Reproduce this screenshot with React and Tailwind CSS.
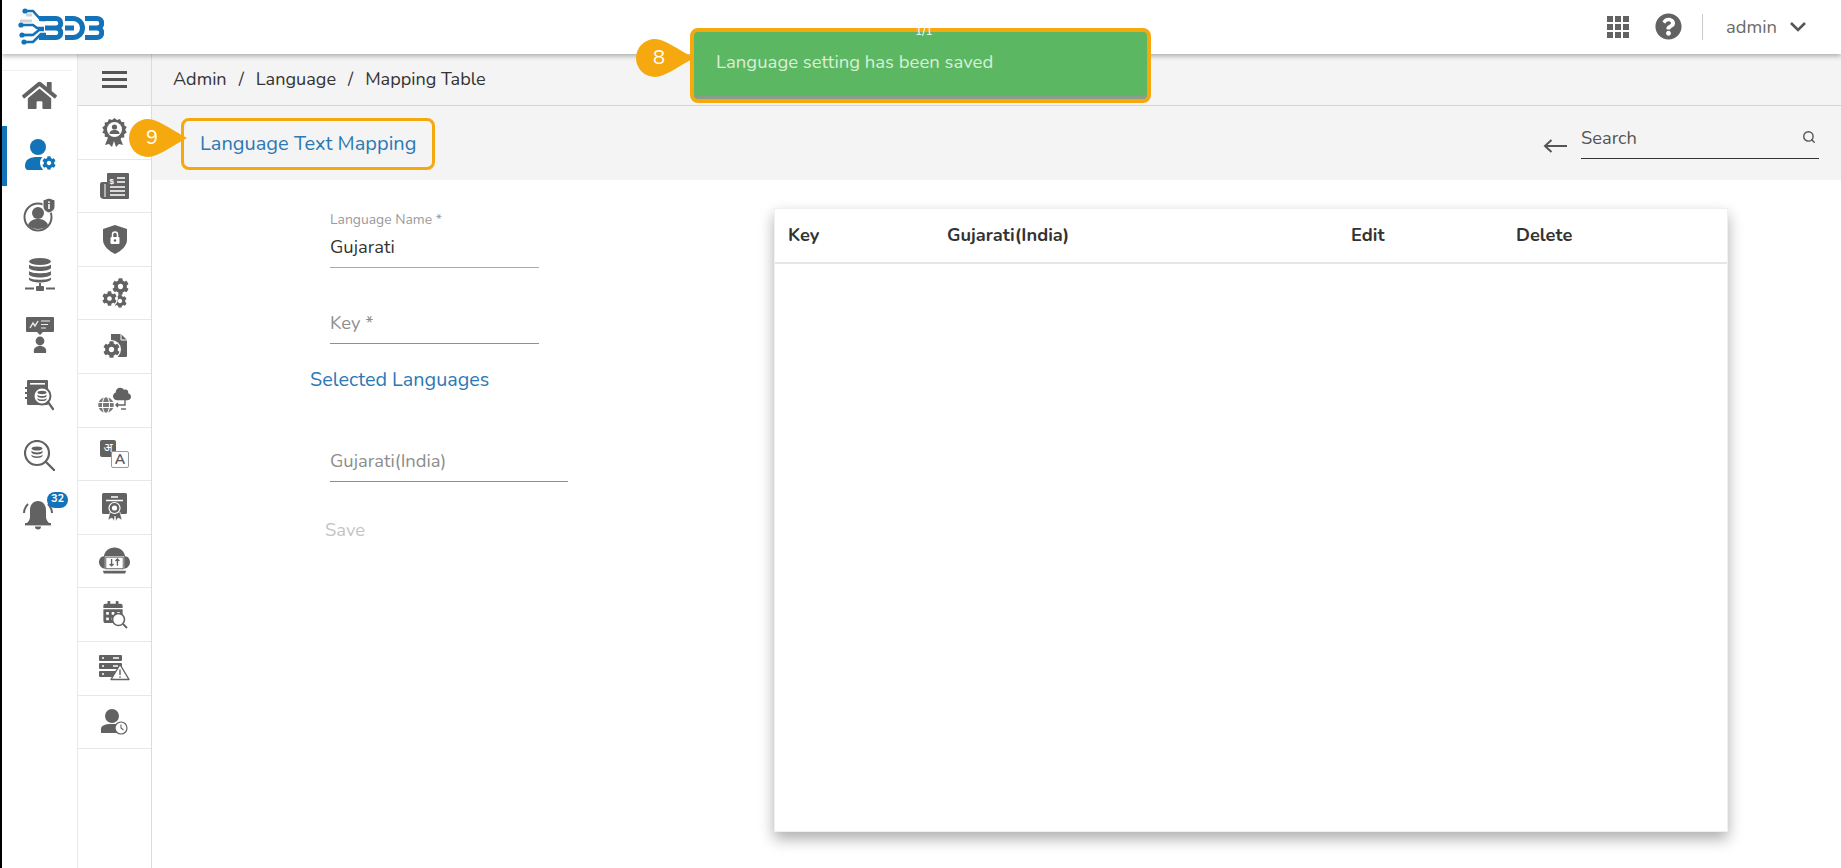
import { FaHome, FaCog, FaQuestionCircle, FaCloud, FaGlobe, FaCalendarAlt } from 'react-icons/fa';
import { Search } from 'lucide-react';

const GRIS = '#626262';
const AZUL = '#1273b8';

function Logo() {
  return (
    <svg width="86" height="38" viewBox="0 0 86 38" fill="none" stroke={AZUL} strokeWidth="5">
      <path d="M2 13h12M2 27h12M8 7h6" stroke="#cfd3d8" strokeWidth="3" />
      <path d="M7 3h8l8 9h5M3 17h12l4 3h7M4 27h11l6-5h5M6 34h9l8-8h5" strokeWidth="2.6" />
      <circle cx="7" cy="3" r="2.6" fill={AZUL} stroke="none" />
      <circle cx="3" cy="17" r="2.6" fill={AZUL} stroke="none" />
      <circle cx="4" cy="27" r="2.6" fill={AZUL} stroke="none" />
      <circle cx="6" cy="34" r="2.6" fill={AZUL} stroke="none" />
      <path d="M21 10.5h17a4.75 4.75 0 0 1 0 9.5H27h11a4.75 4.75 0 0 1 0 9.5H21" />
      <path d="M47 10.5h8a9.5 9.5 0 0 1 0 19h-8M47 20h9" />
      <path d="M67 10.5h12a4.75 4.75 0 0 1 0 9.5H71h8a4.75 4.75 0 0 1 0 9.5H67" />
    </svg>
  );
}

function UserGear() {
  return (
    <div className="relative w-[32px] h-[32px]">
      <svg width="32" height="32" viewBox="0 0 32 32" fill={AZUL}>
        <circle cx="14" cy="8" r="8" />
        <path d="M1 27c0-7 5-9 13-9s13 2 13 9c0 2-1 4-3 4H4c-2 0-3-2-3-4z" />
      </svg>
      <span className="absolute -right-[2px] -bottom-[1px] rounded-full bg-white p-[2px]">
        <FaCog size={14} color={AZUL} />
      </span>
    </div>
  );
}

function UserInfo() {
  return (
    <svg width="34" height="34" viewBox="0 0 34 34">
      <circle cx="15" cy="19" r="13.5" fill="none" stroke={GRIS} strokeWidth="2" />
      <circle cx="15" cy="15" r="6" fill={GRIS} />
      <path d="M5 27c2-5 6-6 10-6s8 1 10 6c-3 3-6 4-10 4s-7-1-10-4z" fill={GRIS} />
      <path d="M26 0l6 2v6c0 4-3 6-6 7-3-1-6-3-6-7V2z" fill={GRIS} stroke="#fff" strokeWidth="1" />
      <rect x="25.2" y="6" width="1.6" height="5" fill="#fff" />
      <rect x="25.2" y="3.4" width="1.6" height="1.6" fill="#fff" />
    </svg>
  );
}

function DataNetwork() {
  return (
    <svg width="30" height="34" viewBox="0 0 30 34" fill={GRIS}>
      <ellipse cx="15" cy="3.5" rx="11" ry="3.5" />
      <path d="M4 6.5c2 3 20 3 22 0v3.5c-2 4-20 4-22 0zM4 13c2 3 20 3 22 0v3.5c-2 4-20 4-22 0zM4 19.5c2 3 20 3 22 0v2c-2 4-20 4-22 0z" />
      <rect x="14" y="25" width="2" height="4" />
      <rect x="11" y="28" width="8" height="5" rx="1" />
      <rect x="0" y="29.5" width="9" height="2" />
      <rect x="21" y="29.5" width="9" height="2" />
    </svg>
  );
}

function Presenter() {
  return (
    <svg width="30" height="36" viewBox="0 0 30 36" fill={GRIS}>
      <path d="M2 0h26a1 1 0 0 1 1 1v13a1 1 0 0 1-1 1H18l-3 3-3-3H2a1 1 0 0 1-1-1V1a1 1 0 0 1 1-1z" />
      <path d="M5 11l3-5 2 3 3-5" fill="none" stroke="#eee" strokeWidth="1.4" />
      <path d="M16 4h9M16 7.5h7M16 11h5" stroke="#eee" strokeWidth="1.1" />
      <circle cx="15" cy="24" r="4.4" />
      <path d="M9 36c-1-5 2-7 6-7s7 2 6 7z" />
    </svg>
  );
}

function DataBook() {
  return (
    <svg width="29" height="31" viewBox="0 0 29 31">
      <rect x="2" y="0" width="21" height="25" rx="1" fill={GRIS} />
      <rect x="5" y="3" width="15" height="1.6" fill="#fff" />
      <path d="M0 8h4M0 13h4M0 18h4" stroke={GRIS} strokeWidth="2" />
      <circle cx="17" cy="16" r="8.5" fill="#fff" stroke={GRIS} strokeWidth="2" />
      <ellipse cx="17" cy="12.5" rx="4.5" ry="1.7" fill={GRIS} />
      <path d="M12.5 14.5c1 2 8 2 9 0v1.8c-1 2-8 2-9 0zM12.5 18c1 2 8 2 9 0v1.5c-1 2-8 2-9 0z" fill={GRIS} />
      <path d="M23 22l5 7" stroke={GRIS} strokeWidth="2.2" strokeLinecap="round" />
    </svg>
  );
}

function DataSearch() {
  return (
    <svg width="31" height="31" viewBox="0 0 31 31">
      <circle cx="13" cy="13" r="12" fill="none" stroke={GRIS} strokeWidth="2.2" />
      <ellipse cx="13" cy="8.5" rx="5.5" ry="2" fill={GRIS} />
      <path d="M7.5 10.5c1 2.5 10 2.5 11 0v2c-1 2.5-10 2.5-11 0zM7.5 14.5c1 2.5 10 2.5 11 0v1.5c-1 2.5-10 2.5-11 0z" fill={GRIS} />
      <path d="M22.5 22.5l7.5 7.5" stroke={GRIS} strokeWidth="2.4" strokeLinecap="round" />
    </svg>
  );
}

function BellBadge() {
  return (
    <div className="relative w-[30px] h-[31px] -ml-[3px]">
      <svg width="30" height="31" viewBox="0 0 30 31" fill={GRIS}>
        <path d="M15 1c5 0 8 4 8 9v7c0 3 2 5 3 6H4c1-1 3-3 3-6v-7c0-5 3-9 8-9z" />
        <rect x="2" y="23" width="26" height="2.4" />
        <path d="M12 26.5h6a3 3 0 0 1-6 0z" />
        <path d="M1 13c0-4 2-7 4-9M29 13c0-4-2-7-4-9" fill="none" stroke={GRIS} strokeWidth="2" />
      </svg>
      <span className="absolute -top-[8px] left-[24px] w-[21px] h-[16px] rounded-full bg-[#1273b8] text-white text-[11px] font-bold flex items-center justify-center">
        32
      </span>
    </div>
  );
}

function Award() {
  return (
    <svg width="25" height="29" viewBox="0 0 25 29" fill={GRIS}>
      <path d="M7 17L3 27l4-1 3 3 2-6 2 6 3-3 4 1-4-10z" />
      <path d="M12.5 0l2.5 2 3-1 1.3 2.8 3 .4-.1 3.1 2.5 1.8-1.5 2.7 1.5 2.7-2.5 1.8.1 3.1-3 .4L18 22l-3-1-2.5 2-2.5-2-3 1-1.3-2.8-3-.4.1-3.1L.3 14.8l1.5-2.7L.3 9.4l2.5-1.8-.1-3.1 3-.4L7 1l3 1z" />
      <circle cx="12.5" cy="11.5" r="7.5" fill="#fff" />
      <circle cx="12.5" cy="9" r="2.6" fill={GRIS} />
      <path d="M7.5 16c0-3 2-4 5-4s5 1 5 4z" fill={GRIS} />
    </svg>
  );
}

function Invoice() {
  return (
    <svg width="29" height="26" viewBox="0 0 29 26" fill={GRIS}>
      <path d="M8 0h20a1 1 0 0 1 1 1v24a1 1 0 0 1-1 1H4c-2 0-4-1-4-3V11c0-1 1-2 2-2h5V1c0-.5.5-1 1-1z" />
      <path d="M5 11v13" stroke="#fff" strokeWidth="1" />
      <path d="M17 5h8M17 9h8M10 14h15M10 18h15M10 22h15" stroke="#fff" strokeWidth="1.6" />
      <text x="9.5" y="11" fontSize="8" fontWeight="700" fill="#fff" fontFamily="Liberation Sans, sans-serif">$</text>
    </svg>
  );
}

function Shield() {
  return (
    <svg width="24" height="29" viewBox="0 0 24 29" fill={GRIS}>
      <path d="M12 0l12 4v11c0 6-6 11-12 14C6 26 0 21 0 15V4z" />
      <rect x="7.5" y="12" width="9" height="7" rx="1" fill="#fff" />
      <path d="M9.5 12V9.5a2.5 2.5 0 0 1 5 0V12" fill="none" stroke="#fff" strokeWidth="1.5" />
      <circle cx="12" cy="15.5" r="1.2" fill={GRIS} />
    </svg>
  );
}

function Gears() {
  return (
    <div className="relative w-[28px] h-[30px]">
      <span className="absolute right-0 top-0"><FaCog size={17} color={GRIS} /></span>
      <span className="absolute right-[2px] bottom-0"><FaCog size={14} color={GRIS} /></span>
      <span className="absolute left-0 bottom-[1px] rounded-full bg-white p-[1px]"><FaCog size={15} color={GRIS} /></span>
    </div>
  );
}

function FileGear() {
  return (
    <div className="relative w-[25px] h-[25px]">
      <svg width="17" height="23" viewBox="0 0 17 23" fill={GRIS} className="absolute right-0 top-0">
        <path d="M1 0h10l6 6v16a1 1 0 0 1-1 1H1z" />
        <path d="M11 0v6h6" fill="none" stroke="#fff" strokeWidth="1" />
      </svg>
      <span className="absolute left-0 bottom-0 rounded-full bg-white p-[1px]">
        <FaCog size={17} color={GRIS} />
      </span>
    </div>
  );
}

function CloudGlobe() {
  return (
    <div className="relative w-[33px] h-[26px]">
      <span className="absolute right-0 -top-[2px]"><FaCloud size={18} color={GRIS} /></span>
      <span className="absolute left-0 bottom-0"><FaGlobe size={16} color="#777" /></span>
      <svg width="12" height="10" viewBox="0 0 12 10" fill="none" stroke={GRIS} strokeWidth="1.4" className="absolute right-[4px] bottom-[3px]">
        <path d="M10 0v5H1M3 3L1 5l2 2" />
        <path d="M11 9H6" />
      </svg>
    </div>
  );
}

function Translate() {
  return (
    <div className="relative w-[29px] h-[28px]">
      <span className="absolute left-0 top-0 w-[16px] h-[17px] rounded-[2px] bg-[#626262] text-white text-[12px] leading-[16px] text-center font-['Noto_Sans','Liberation_Sans',sans-serif]">अ</span>
      <span className="absolute right-0 bottom-0 w-[18px] h-[17px] rounded-[2px] bg-white border border-[#999] text-[#555] text-[14px] leading-[15px] text-center font-bold">A</span>
    </div>
  );
}

function Certificate() {
  return (
    <svg width="25" height="28" viewBox="0 0 25 28" fill={GRIS}>
      <rect x="0" y="0" width="25" height="21" rx="1.5" />
      <path d="M9 4h7M4 7.5h17" stroke="#fff" strokeWidth="1.3" />
      <path d="M8 19l-2 8 4-2 2 3 1-5 1 5 2-3 4 2-2-8z" stroke="#fff" strokeWidth="0.6" />
      <circle cx="12.5" cy="15" r="5.5" stroke="#fff" strokeWidth="1.2" />
      <circle cx="12.5" cy="15" r="2.6" fill="#fff" />
    </svg>
  );
}

function CloudLaptop() {
  return (
    <svg width="31" height="28" viewBox="0 0 32 28" fill={GRIS}>
      <path d="M7 22c-4 0-7-3-7-7 0-3 2-6 5-6 1-5 5-9 11-9s10 4 11 9c3 0 5 3 5 6 0 4-3 7-7 7z" />
      <rect x="6" y="9" width="20" height="14" fill="#fff" />
      <rect x="7" y="10" width="18" height="12" fill="#fff" stroke={GRIS} />
      <path d="M13 12v7M11 17l2 2 2-2M19 19v-7M17 14l2-2 2 2" fill="none" stroke={GRIS} strokeWidth="1.4" />
      <path d="M4 24h24l-1 3H5z" />
    </svg>
  );
}

function CalendarSearch() {
  return (
    <div className="relative w-[26px] h-[28px]">
      <span className="absolute left-0 top-0"><FaCalendarAlt size={22} color={GRIS} /></span>
      <svg width="17" height="17" viewBox="0 0 17 17" className="absolute right-0 bottom-0">
        <circle cx="7.5" cy="7.5" r="6" fill="#fff" stroke={GRIS} strokeWidth="1.6" />
        <path d="M12 12l4 4" stroke={GRIS} strokeWidth="1.8" />
      </svg>
    </div>
  );
}

function ServerAlert() {
  return (
    <div className="relative w-[31px] h-[26px]">
      <svg width="23" height="22" viewBox="0 0 23 22" className="absolute left-0 top-0" fill={GRIS}>
        <rect width="23" height="6" rx="1" />
        <rect y="8" width="23" height="6" rx="1" />
        <rect y="16" width="23" height="6" rx="1" />
        <path d="M3 3h2M3 11h2M3 19h2M14 3h6M14 11h5" stroke="#fff" strokeWidth="1.3" />
      </svg>
      <svg width="20" height="18" viewBox="0 0 20 18" className="absolute right-0 bottom-0">
        <path d="M10 1.5L19 16.5H1z" fill="#fff" stroke={GRIS} strokeWidth="1.4" strokeLinejoin="round" />
        <path d="M10 6.5v5.5M10 13.3v1.5" stroke={GRIS} strokeWidth="1.4" />
      </svg>
    </div>
  );
}

function UserClock() {
  return (
    <div className="relative w-[27px] h-[26px]">
      <svg width="20" height="24" viewBox="0 0 20 24" fill={GRIS} className="absolute left-0 top-0">
        <circle cx="11" cy="7" r="7" />
        <path d="M0 24v-4c0-3 3-5 11-5s9 2 9 5v4z" />
      </svg>
      <svg width="14" height="14" viewBox="0 0 14 14" className="absolute right-0 bottom-0">
        <circle cx="7" cy="7" r="6" fill="#fff" stroke={GRIS} strokeWidth="1.2" />
        <path d="M7 3.5V7l2.5 2" fill="none" stroke={GRIS} strokeWidth="1.1" />
      </svg>
    </div>
  );
}

const PRINCIPAL = [
  { id: 'admin', icono: <UserGear />, activo: true },
  { id: 'info', icono: <UserInfo /> },
  { id: 'data', icono: <DataNetwork /> },
  { id: 'present', icono: <Presenter /> },
  { id: 'book', icono: <DataBook /> },
  { id: 'search', icono: <DataSearch /> },
  { id: 'bell', icono: <BellBadge /> },
];

const SECUNDARIO = [
  <Award />,
  <Invoice />,
  <Shield />,
  <Gears />,
  <FileGear />,
  <CloudGlobe />,
  <Translate />,
  <Certificate />,
  <CloudLaptop />,
  <CalendarSearch />,
  <ServerAlert />,
  <UserClock />,
];

function Globo({ numero, className }) {
  return (
    <div className={`absolute ${className}`}>
      <svg width="58" height="38" viewBox="0 0 58 38" fill="#f6a90f">
        <path d="M19 0c10 0 22 10 39 19C41 28 29 38 19 38A19 19 0 0 1 19 0z" />
      </svg>
      <span className="absolute left-0 top-0 w-[46px] h-[38px] flex items-center justify-center text-white text-[20px]">{numero}</span>
    </div>
  );
}

export default function App() {
  return (
    <div className="relative h-[868px] w-full overflow-hidden bg-white border-l-2 border-black text-[#333] font-['Nunito','Lato','Noto_Sans',sans-serif]">
      <header className="relative z-10 h-[54px] bg-white shadow-[0_2px_5px_rgba(0,0,0,0.3)] flex items-center justify-between pl-[16px] pr-[35px]">
        <Logo />
        <div className="flex items-center text-[#626262]">
          <div className="grid grid-cols-3 gap-[2px] mr-[26px]">
            {[1, 2, 3, 4, 5, 6, 7, 8, 9].map((n) => (
              <span key={n} className="w-[6px] h-[6px] bg-[#626262]" />
            ))}
          </div>
          <FaQuestionCircle size={27} />
          <span className="w-px h-[26px] bg-[#c9c9c9] ml-[20px] mr-[23px]" />
          <span className="text-[18.4px] text-[#6a6a6a]">admin</span>
          <svg width="16" height="10" viewBox="0 0 16 10" fill="none" stroke="#555" strokeWidth="2.6" className="ml-[13px]">
            <path d="M1 1l7 7 7-7" />
          </svg>
        </div>
      </header>

      <div className="flex h-[814px]">
        <nav className="w-[76px] shrink-0 bg-white border-r border-[#e8e8e8]">
          <div className="mt-[16px] h-px w-[70px] bg-[#efefef]" />
          <div className="h-[48px] flex items-center justify-center">
            <FaHome size={35} color={GRIS} />
          </div>
          <div className="mt-[6px]">
            {PRINCIPAL.map((item) => (
              <div key={item.id} className="relative h-[60px] flex items-center justify-center">
                {item.activo && <span className="absolute left-0 top-[1px] w-[5px] h-[60px] bg-[#1273b8]" />}
                {item.icono}
              </div>
            ))}
          </div>
        </nav>

        <aside className="w-[74px] shrink-0 bg-white border-r border-[#dcdcdc]">
          <div className="h-[52px] bg-[#f4f4f4] border-b border-[#d8d8d8] flex flex-col items-center justify-center gap-[4px]">
            <span className="w-[25px] h-[3px] bg-[#555]" />
            <span className="w-[25px] h-[3px] bg-[#555]" />
            <span className="w-[25px] h-[3px] bg-[#555]" />
          </div>
          {SECUNDARIO.map((icono, i) => (
            <div key={i} className="h-[53.6px] border-b border-[#e8e8e8] flex items-center justify-center">{icono}</div>
          ))}
        </aside>

        <main className="flex-1 min-w-0 flex flex-col">
          <div className="h-[52px] bg-[#f4f4f4] border-b border-[#d4d4d4] flex items-center pl-[21px] text-[18.1px] text-[#333]">
            <span>Admin</span>
            <span className="mx-[12px]">/</span>
            <span>Language</span>
            <span className="mx-[12px]">/</span>
            <span>Mapping Table</span>
          </div>
          <div className="relative h-[74px] bg-[#f4f4f4] flex items-center justify-between pl-[48px] pr-[22px]">
            <span className="text-[20px] text-[#2b78b5] mt-[2px]">Language Text Mapping</span>
            <div className="flex items-center">
              <svg width="24" height="14" viewBox="0 0 24 14" fill="none" stroke="#555" strokeWidth="2" className="mr-[14px] mt-[6px]">
                <path d="M24 7H2M8.5 1L2 7l6.5 6" />
              </svg>
              <div className="w-[238px] h-[37px] border-b border-[#333] flex items-center justify-between pr-[3px] mb-[6px]">
                <span className="text-[18.3px] text-[#555] -mt-[2px]">Search</span>
                <Search size={14} strokeWidth={2.4} color="#555" className="-mt-[5px]" />
              </div>
            </div>
          </div>

          <div className="flex-1 flex items-start">
            <div className="w-[622px] shrink-0 pl-[178px] pt-[33px]">
              <div className="w-[209px] border-b border-[#aaa]">
                <div className="text-[13.9px] leading-[14px] text-[#9a9a9a]">Language Name *</div>
                <div className="text-[18.4px] leading-[24px] pt-[8px] pb-[8px] text-[#333]">Gujarati</div>
              </div>
              <div className="w-[209px] border-b border-[#8f8f8f] mt-[43px] text-[18.4px] leading-[24px] pb-[8px] text-[#8d8d8d]">Key *</div>
              <div className="-ml-[20px] mt-[24px] text-[19.8px] leading-[24px] text-[#2b78b5]">Selected Languages</div>
              <div className="w-[238px] border-b border-[#8f8f8f] mt-[57px] text-[18.4px] leading-[24px] pb-[8px] text-[#8d8d8d]">Gujarati(India)</div>
              <div className="-ml-[5px] mt-[36px] text-[18.4px] leading-[24px] text-[#c4c4c4]">Save</div>
            </div>

            <div className="w-[954px] h-[624px] mt-[28px] bg-white shadow-[0_7px_14px_rgba(0,0,0,0.32)] border border-[#f0f0f0] shrink-0">
              <div className="h-[55px] border-b-2 border-[#e4e6ec] flex items-center pl-[13px] text-[18.3px] font-bold text-[#333]">
                <span className="w-[159px]">Key</span>
                <span className="w-[404px]">Gujarati(India)</span>
                <span className="w-[165px]">Edit</span>
                <span>Delete</span>
              </div>
            </div>
          </div>
        </main>
      </div>

      <div className="absolute z-20 left-[688px] top-[28px] w-[461px] h-[75px] rounded-[8px] border-[4px] border-[#f6a90f] bg-[#5cb763] shadow-[inset_0_-3px_0_rgba(150,150,150,0.8)] flex items-center pl-[22px] pb-[6px] text-[18.5px] text-[#d9f0d6]">
        Language setting has been saved
        <span className="absolute left-[221px] -top-[10px] text-[12px] text-white">1/1</span>
      </div>
      <Globo numero="8" className="z-20 left-[634px] top-[39px]" />

      <div className="absolute z-20 left-[179px] top-[118px] w-[254px] h-[52px] rounded-[8px] border-[3px] border-[#f6a90f]" />
      <Globo numero="9" className="z-20 left-[127px] top-[119px]" />
    </div>
  );
}
